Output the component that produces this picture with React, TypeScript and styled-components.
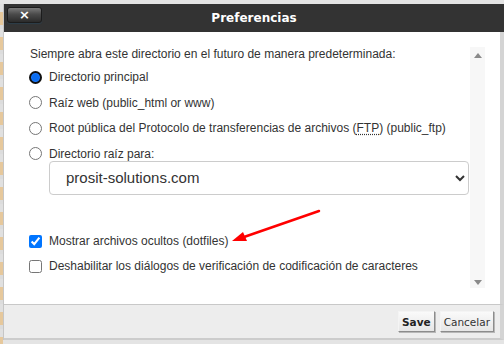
import styled, { createGlobalStyle } from 'styled-components'

const GlobalStyle = createGlobalStyle`
  html, body {
    margin: 0;
    padding: 0;
    background: #e4e4e4;
  }
  * {
    box-sizing: border-box;
  }
`

const Page = styled.div`
  display: flex;
  width: 504px;
  height: 344px;
  overflow: hidden;
  padding-top: 4px;
  background: #e4e4e4;
`

const Stripe = styled.div`
  width: 3px;
  flex: none;
  background: repeating-linear-gradient(
    to bottom,
    #e0e0e0 0px,
    #e0e0e0 8px,
    #e6c89c 8px,
    #e6c89c 21px,
    #dcdcdc 21px,
    #dcdcdc 25px
  );
`

const Dialog = styled.div`
  position: relative;
  width: 501px;
  height: 336px;
  display: flex;
  flex-direction: column;
  border-left: 1px solid #c6c6c6;
`

const TitleBar = styled.div`
  height: 28px;
  flex: none;
  display: flex;
  align-items: center;
  justify-content: center;
  position: relative;
  background: #333333;
  color: #ffffff;
  font: bold 12px 'DejaVu Sans', Verdana, sans-serif;
`

const CloseButton = styled.button`
  position: absolute;
  left: 3px;
  top: 3px;
  width: 35px;
  height: 16px;
  padding: 0;
  border: 1px solid #1c1c1c;
  border-radius: 3px;
  background: linear-gradient(to bottom, #7a7a7a 0%, #4a4a4a 45%, #2b2b2b 100%);
  box-shadow: 0 1px 1px rgba(40, 70, 90, 0.6);
  color: #ffffff;
  font: bold 13px 'DejaVu Sans', sans-serif;
  line-height: 12px;
`

const Body = styled.div`
  height: 272px;
  flex: none;
  display: flex;
  background: #ffffff;
  padding: 14px 15px 16px 25px;
  border-right: 4px solid #d4d4d4;
`

const Content = styled.div`
  flex: 1;
  display: flex;
  flex-direction: column;
  font: 12px 'Liberation Sans', Arial, sans-serif;
  color: #333333;
`

const Heading = styled.div`
  line-height: 16px;
  padding-left: 1px;
`

const OptionList = styled.div`
  display: flex;
  flex-direction: column;
  gap: 11.5px;
  margin-top: 8px;
`

const Row = styled.label<{ $top?: number }>`
  display: flex;
  align-items: center;
  gap: 7px;
  height: 14px;
  line-height: 14px;
  white-space: nowrap;
  margin-top: ${p => p.$top ?? 0}px;

  input {
    margin: 0;
    width: 13px;
    height: 13px;
  }
`

const Radio = styled.input.attrs({ type: 'radio' })`
  appearance: none;
  flex: none;
  border-radius: 50%;
  border: 1px solid #767676;
  background: #ffffff;

  &:checked {
    border: 2px solid #101010;
    background: #0a6cf0;
    box-shadow: inset 0 0 0 1px #1e7cff;
  }
`

const Abbr = styled.span`
  text-decoration: underline dotted;
  text-underline-offset: 2px;
`

const Select = styled.select`
  margin-left: 20px;
  width: 420px;
  height: 34px;
  padding: 0 10px 0 12px;
  border: 1px solid #cccccc;
  border-radius: 4px;
  background: #ffffff;
  color: #333333;
  font: 15px 'Liberation Sans', Arial, sans-serif;
`

const Track = styled.div`
  width: 15px;
  margin-top: 1px;
  display: flex;
  flex-direction: column;
  justify-content: space-between;
  align-items: center;
  padding: 6px 0 3px;
  background: #f7f7f7;
`

const Arrow = styled.div<{ $down?: boolean }>`
  width: 0;
  height: 0;
  border-left: 4.5px solid transparent;
  border-right: 4.5px solid transparent;
  ${p => (p.$down ? 'border-top: 5px solid #8a8a8a;' : 'border-bottom: 5px solid #8a8a8a;')}
`

const Footer = styled.div`
  height: 36px;
  flex: none;
  display: flex;
  align-items: center;
  justify-content: flex-end;
  gap: 5px;
  padding-right: 6px;
  background: #ededed;
  border-top: 1px solid #c8c8c8;
  border-bottom: 2px solid #cccccc;
  border-right: 4px solid #d4d4d4;
`

const Button = styled.button<{ $primary?: boolean }>`
  height: 21px;
  padding: 0 3px;
  border: 1px solid;
  border-color: #f4f4f4 #8c8c8c #8c8c8c #f4f4f4;
  box-shadow: 1px 1px 0 #b8b8b8;
  background: linear-gradient(to bottom, #fafafa, #e6e6e6);
  color: ${p => (p.$primary ? '#222222' : '#333333')};
  font: ${p => (p.$primary ? 'bold' : 'normal')} 10.5px 'DejaVu Sans', Verdana, sans-serif;
`

const Pointer = styled.svg`
  position: absolute;
  left: 0;
  top: 0;
  pointer-events: none;
`

export default function App() {
  return (
    <Page>
      <GlobalStyle />
      <Stripe />
      <Dialog>
        <TitleBar>
          <CloseButton>×</CloseButton>
          Preferencias
        </TitleBar>

        <Body>
          <Content>
            <Heading>Siempre abra este directorio en el futuro de manera predeterminada:</Heading>
            <OptionList>
              <Row><Radio name="dir" defaultChecked />Directorio principal</Row>
              <Row><Radio name="dir" />Raíz web (public_html or www)</Row>
              <Row>
                <Radio name="dir" />
                <span>Root pública del Protocolo de transferencias de archivos (<Abbr>FTP</Abbr>) (public_ftp)</span>
              </Row>
              <Row><Radio name="dir" />Directorio raíz para:</Row>
            </OptionList>
            <Select defaultValue="prosit-solutions.com">
              <option>prosit-solutions.com</option>
            </Select>
            <Row $top={39.5}><input type="checkbox" defaultChecked />Mostrar archivos ocultos (dotfiles)</Row>
            <Row $top={11}><input type="checkbox" />Deshabilitar los diálogos de verificación de codificación de caracteres</Row>
          </Content>
          <Track>
            <Arrow />
            <Arrow $down />
          </Track>
        </Body>

        <Footer>
          <Button $primary>Save</Button>
          <Button>Cancelar</Button>
        </Footer>

        <Pointer width="501" height="336" viewBox="0 0 501 336">
          <line x1="315" y1="207" x2="240" y2="233" stroke="#ff0000" strokeWidth="2.5" strokeLinecap="round" />
          <polygon points="228,237 239,228 243,237" fill="#ff0000" />
        </Pointer>
      </Dialog>
    </Page>
  )
}
